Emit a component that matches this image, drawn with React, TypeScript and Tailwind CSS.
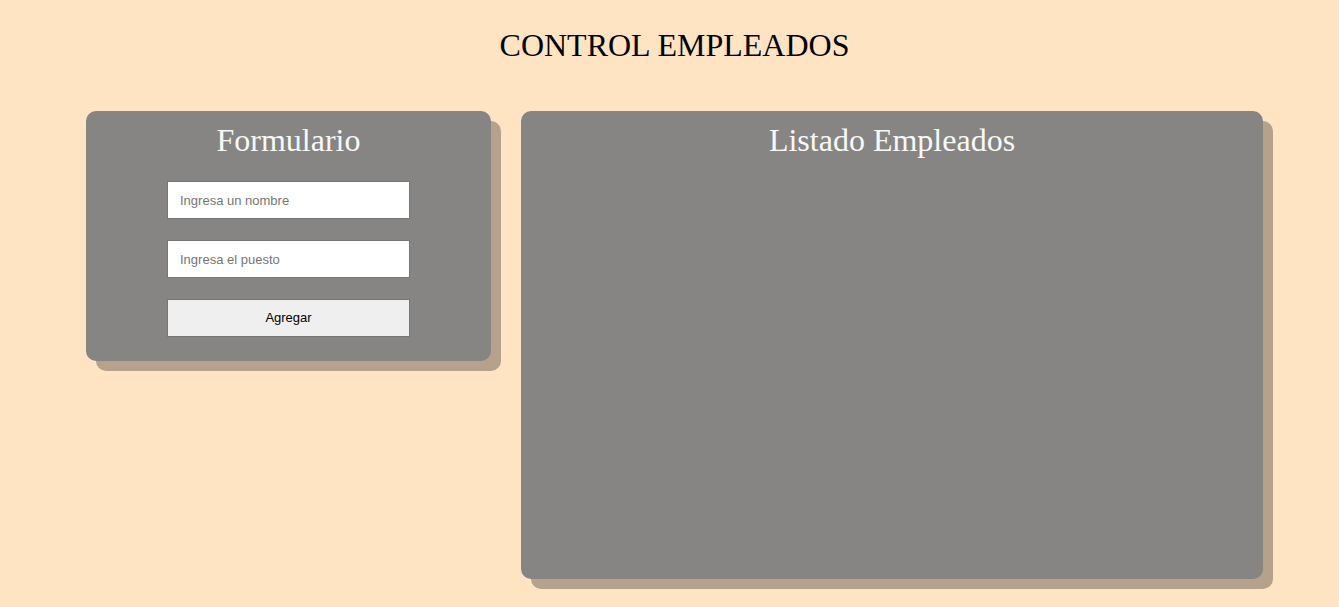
export default function App() {
  return (
    <div className="min-h-[607px] bg-[#ffe4c4] font-['Liberation_Serif',serif]">
      <h1 className="pl-[10px] pt-[27px] text-center text-[32px] leading-[37px] text-black">CONTROL EMPLEADOS</h1>
      <div className="mt-[47px] flex items-start gap-[30px] pl-[86px]">
        <section className="w-[405px] rounded-[10px] bg-[#868584] pb-[24px] shadow-[10px_10px_0_#b5a18c]">
          <h2 className="pt-[8px] text-center text-[32px] leading-[42px] text-[#f8f8f8]">Formulario</h2>
          <form className="mt-[20px] flex flex-col items-center gap-[21px] font-['Liberation_Sans',Arial,sans-serif] text-[13px]">
            <input
              placeholder="Ingresa un nombre"
              className="h-[38px] w-[243px] border border-[#767676] bg-white px-[12px] text-black placeholder:text-[#757575] outline-none"
            />
            <input
              placeholder="Ingresa el puesto"
              className="h-[38px] w-[243px] border border-[#767676] bg-white px-[12px] text-black placeholder:text-[#757575] outline-none"
            />
            <button
              type="button"
              className="h-[38px] w-[243px] border border-[#767676] bg-[#efefef] text-black"
            >
              Agregar
            </button>
          </form>
        </section>
        <section className="h-[468px] w-[742px] rounded-[10px] bg-[#868584] shadow-[10px_10px_0_#b5a18c]">
          <h2 className="pt-[8px] text-center text-[32px] leading-[42px] text-[#f8f8f8]">Listado Empleados</h2>
        </section>
      </div>
    </div>
  )
}
